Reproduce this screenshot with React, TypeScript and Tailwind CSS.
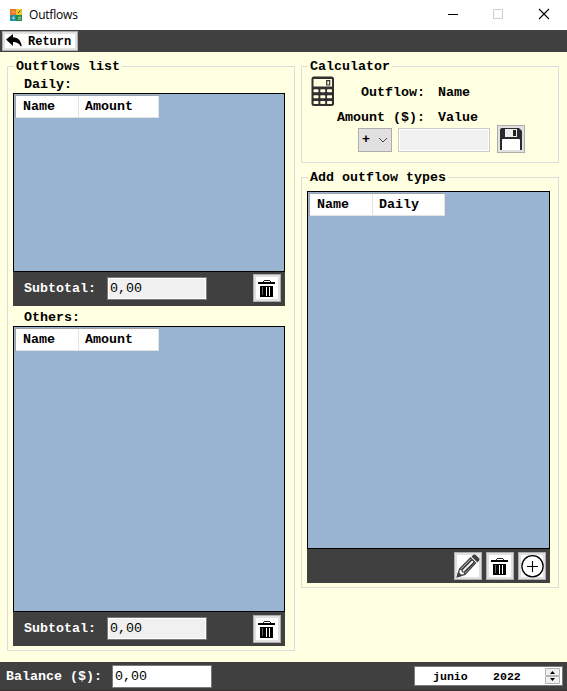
import type { ReactNode } from 'react';

const mono = "font-['Liberation_Mono','Courier_New',monospace]";

function Trash() {
  return (
    <svg width="22" height="22" viewBox="0 0 22 22" className="shrink-0" shapeRendering="crispEdges">
      <path d="M8 3h6v1h1v1h-1V4H8v1H7V4h1z" fill="#222" />
      <path d="M2 5h17v2H2zM4 9h13v11H4z" fill="#000" />
      <path d="M6 10h1v8H6z" fill="#666" />
      <path d="M10 10h1v9h-1zM13 10h1v9h-1z" fill="#fff" />
    </svg>
  );
}

function Pencil() {
  return (
    <svg width="24" height="24" viewBox="0 0 24 24" className="shrink-0" fill="none" stroke="#404040" strokeWidth="1.3">
      <path d="M1.5 22.5 3.5 15 14.5 4 19.5 9 9 20.5Z" fill="#fff" />
      <path d="m4 15 2 .8 .5 2 1.8.4.7 2" />
      <path d="M6 15.5 15.8 5.7M8.6 18 18.3 8.3" strokeWidth="1.8" />
      <path d="m1.5 22.5 1-3.8 2.8 2.8z" fill="#404040" />
      <path d="m16.4 2.6 1.4-1.2q1-.6 1.8.2l2.8 2.8q.8.8.2 1.8l-1.2 1.4Z" fill="#404040" />
    </svg>
  );
}

function Plus() {
  return (
    <svg width="24" height="24" viewBox="0 0 24 24" className="shrink-0" fill="none" stroke="#000">
      <circle cx="12.5" cy="12.2" r="10.6" strokeWidth="1.3" />
      <path d="M7 12.5h11M12.5 7v11" strokeWidth="1.1" />
    </svg>
  );
}

function Floppy() {
  return (
    <svg width="24" height="24" viewBox="0 0 24 24" className="shrink-0">
      <path d="M3 1h17l3 3v19H1V3q0-2 2-2z" fill="#2b2b2f" />
      <path d="M6 2h12v8H6z" fill="#eee" />
      <path d="M14 3h3v6h-3z" fill="#222" />
      <path d="M3 13q0-1 1-1h16q1 0 1 1v10H3z" fill="#fff" />
    </svg>
  );
}

function Calculator() {
  return (
    <svg width="24" height="31" viewBox="0 0 24 31" className="shrink-0">
      <rect x=".5" y=".5" width="22.5" height="29.5" rx="2.5" fill="#303030" />
      <path d="M2.5 3h18.5v7.5H2.5z" fill="#ffffe1" />
      <path d="M15.7 4.6h3v4.4h-3z" fill="none" stroke="#303030" strokeWidth="1.2" />
      {[13.3, 19.2, 25].map((y) =>
        [2.5, 9.3, 16].map((x) => <rect key={`${x}-${y}`} x={x} y={y} width="5" height="3" rx=".8" fill="#ffffe1" />),
      )}
    </svg>
  );
}

function AppIcon() {
  return (
    <svg width="12" height="12" viewBox="0 0 12 12" className="shrink-0">
      <path d="M0 0h6v6H0z" fill="#e8782c" />
      <path d="M6 0h6v6H6z" fill="#f6c72c" />
      <path d="M0 6h6v6H0z" fill="#228db4" />
      <path d="M6 6h6v6H6z" fill="#248b50" />
      <path d="M2 3h3M2 9h3M3.5 7.5v3M8 8.3h3M8 10h3" stroke="#f2e9a0" strokeWidth=".7" />
      <path d="m8 4 2.5-2.5" stroke="#555020" />
    </svg>
  );
}

function IconButton({ children, className = '' }: { children: ReactNode; className?: string }) {
  return (
    <button className={`flex size-7 shrink-0 items-center justify-center border border-[#adadad] bg-white shadow-[inset_0_0_0_2px_#e1e1e1] ${className}`}>
      {children}
    </button>
  );
}

function Group({ title, className, children }: { title: string; className: string; children: ReactNode }) {
  return (
    <section className={`border border-[#dcdcdc] ${className}`}>
      <h2 className="-mt-[9px] ml-[6px] block h-[17px] w-fit bg-[#ffffe1] px-0.5 leading-[17px]">{title}</h2>
      {children}
    </section>
  );
}

function Grid({ columns, className, last }: { columns: [string, string]; className: string; last: string }) {
  return (
    <div className={`border border-black bg-[#99b4d1] pt-px ${className}`}>
      <div className="ml-px flex h-[23px] w-fit border-t border-l border-[#a0a0a0] bg-white leading-[22px]">
        <div className="w-[63px] border-r border-b border-[#e3e3e3] pl-[7px]">{columns[0]}</div>
        <div className={`border-r border-b border-[#e3e3e3] pl-[6px] ${last}`}>{columns[1]}</div>
      </div>
    </div>
  );
}

function SubtotalBar({ button }: { button: string }) {
  return (
    <div className="flex h-[34px] bg-[#404040] pl-[11px]">
      <span className="mt-[9px] w-[83px] leading-4 text-white">Subtotal:</span>
      <div className="mt-[5px] h-[23px] w-[100px] border border-[#7a7a7a] bg-[#f0f0f0] pl-0.5 leading-[21px] font-normal shadow-[inset_0_0_0_1px_white]">0,00</div>
      <IconButton className={`ml-[46px] ${button}`}><Trash /></IconButton>
    </div>
  );
}

export default function App() {
  return (
    <div className={`flex h-[691px] w-[567px] flex-col overflow-hidden bg-[#ffffe1] text-[13.33px] font-bold text-black ${mono}`}>
      <header className="flex h-[30px] shrink-0 items-center bg-white pl-[10px]">
        <AppIcon />
        <span className="ml-[7px] font-['Open_Sans','Noto_Sans',sans-serif] text-[12px] font-normal tracking-[-0.2px]">Outflows</span>
        <svg width="106" height="12" viewBox="0 0 106 12" className="ml-auto mr-[14px] -mt-0.5" fill="none">
          <path d="M1 6.5h10" stroke="#000" />
          <path d="M46.5 1.5h9v9h-9z" stroke="#ccc" />
          <path d="m92 1 10 10M102 1 92 11" stroke="#000" strokeWidth="1.1" />
        </svg>
      </header>

      <nav className="h-[22px] shrink-0 bg-[#404040] pt-px pl-0.5">
        <button className="flex h-5 w-[76px] items-center border border-[#adadad] bg-white pl-[3px] text-[12px] shadow-[inset_0_0_0_2px_#e1e1e1]">
          <svg width="16" height="14" viewBox="0 0 16 14" className="shrink-0">
            <path d="M0 5.5 7 0v3.3c5 .2 7.5 3 8.7 8.2l-.7 1.2C13.2 9.5 11 8 7 8v4z" />
          </svg>
          <span className="mt-0.5 ml-[6px] leading-4">Return</span>
        </button>
      </nav>

      <main className="flex h-[610px] shrink-0 items-start gap-1.5 pt-3.5 pl-[7px]">
        <Group title="Outflows list" className="h-[585px] w-[288px]">
          <div className="ml-[5px] w-[272px]">
            <h3 className="h-[18px] pl-[11px] leading-5">Daily:</h3>
            <Grid columns={['Name', 'Amount']} className="h-[179px]" last="w-[80px]" />
            <SubtotalBar button="mt-0.5" />
            <h3 className="h-5 pl-[11px] leading-6">Others:</h3>
            <Grid columns={['Name', 'Amount']} className="h-[286px]" last="w-[80px]" />
            <SubtotalBar button="mt-[3px]" />
          </div>
        </Group>

        <div className="flex w-[258px] flex-col gap-3.5">
          <Group title="Calculator" className="h-[97px]">
            <div className="flex pl-[9px]">
              <div className="mt-px"><Calculator /></div>
              <div className="w-[90px] pt-[9px] text-right leading-[17px]">
                <div>Outflow:</div>
                <div className="mt-2">Amount ($):</div>
              </div>
              <div className="ml-[13px] pt-[9px] leading-[17px]">
                <div>Name</div>
                <div className="mt-2">Value</div>
              </div>
            </div>
            <div className="-mt-px flex pl-14">
              <div className="mt-[3px] flex h-6 w-[34px] items-center border border-[#adadad] bg-[#e1e1e1] pl-[3px]">
                <span>+</span>
                <svg width="10" height="6" viewBox="0 0 10 6" className="ml-2" fill="none" stroke="#444">
                  <path d="m1 1 4 4 4-4" />
                </svg>
              </div>
              <div className="mt-[3px] ml-1.5 h-6 w-[92px] border border-[#ccc] bg-[#f0f0f0] shadow-[inset_0_0_0_1px_white]" />
              <button className="ml-[7px] flex size-7 items-center justify-center border border-[#adadad] bg-[#e1e1e1]"><Floppy /></button>
            </div>
          </Group>

          <Group title="Add outflow types" className="h-[411px]">
            <div className="mt-[5px] ml-[5px] w-[243px]">
              <Grid columns={['Name', 'Daily']} className="h-[358px]" last="w-[72px]" />
              <div className="flex h-[34px] justify-end gap-1 bg-[#404040] pt-[3px] pr-1">
                <IconButton><Pencil /></IconButton>
                <IconButton><Trash /></IconButton>
                <IconButton><Plus /></IconButton>
              </div>
            </div>
          </Group>
        </div>
      </main>

      <footer className="flex h-[29px] shrink-0 border-b border-[#3d3032] bg-[#404040] pl-1.5">
        <span className="mt-1.5 w-[106px] leading-[18px] text-white">Balance ($):</span>
        <div className="mt-[3px] h-[23px] w-[100px] border border-[#7a7a7a] bg-white pl-0.5 leading-[21px] font-normal">0,00</div>
        <div className="mt-1 mr-1 ml-auto flex h-5 w-[149px] border border-[#7a7a7a] bg-white pl-[18px] text-[12px] leading-[19px]">
          <span className="w-[60px] text-[11.6px]">junio</span>
          <span className="text-[11.6px]">2022</span>
          <svg width="15" height="16" viewBox="0 0 15 16" className="mt-px mr-0.5 ml-auto">
            <path d="M.5.5h14v7H.5zM.5 8.5h14v7H.5z" fill="#f0f0f0" stroke="#b4b4b4" />
            <path d="M5 6 7.5 3 10 6zM5 10h5l-2.5 3z" />
          </svg>
        </div>
      </footer>
    </div>
  );
}
